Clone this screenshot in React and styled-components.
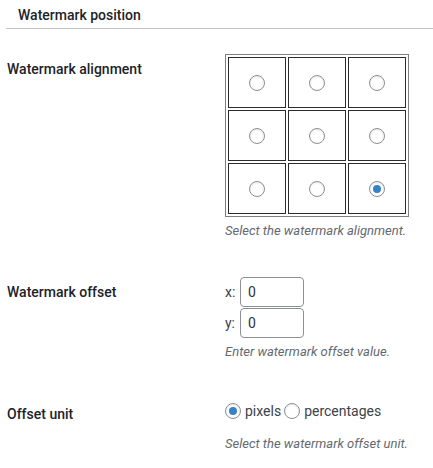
import React, { useState } from "react";
import styled, { createGlobalStyle } from "styled-components";

const GlobalStyle = createGlobalStyle`
  body {
    margin: 0;
    background: #fff;
    font-family: Roboto, "Noto Sans", sans-serif;
    color: #3c434a;
  }
`;

const Page = styled.div`
  padding-left: 6px;
  width: 427px;
`;

const Header = styled.h2`
  margin: 0;
  height: 29px;
  box-sizing: border-box;
  padding: 6px 0 0 12px;
  font-size: 14px;
  font-weight: 500;
  line-height: 18px;
  color: #1d2327;
  border-bottom: 1px solid #c3c4c7;
`;

const Rows = styled.div`
  padding-top: 10px;
`;

const Row = styled.div`
  display: flex;
  padding-left: 1px;
`;

const Label = styled.div`
  width: 218px;
  flex: none;
  padding: ${(p) => p.$top || 20}px 0 20px;
  font-size: 14px;
  font-weight: 500;
  line-height: 18px;
  color: #1d2327;
`;

const Field = styled.div`
  display: flex;
  flex-direction: column;
  align-items: flex-start;
  padding: 15px 0 ${(p) => p.$bottom || 15}px;
  font-size: 14px;
  line-height: 20px;
`;

const Description = styled.p`
  margin: ${(p) => p.$top || 4}px 0 0;
  font-size: 13px;
  line-height: 19px;
  font-style: italic;
  color: #646970;
`;

const Grid = styled.div`
  display: grid;
  grid-template-columns: repeat(3, 58px);
  grid-auto-rows: 51px;
  gap: 2px;
  padding: 2px;
  border: 1px solid #7e7e7e;
`;

const Cell = styled.label`
  display: flex;
  align-items: center;
  justify-content: center;
  border: 1px solid #2c2c2c;
  cursor: pointer;
`;

const Radio = styled.input.attrs({ type: "radio" })`
  appearance: none;
  box-sizing: border-box;
  width: 16px;
  height: 16px;
  margin: 0 ${(p) => p.$gap || 0}px 0 0;
  border: 1px solid #8c8f94;
  border-radius: 50%;
  background: #fff;
  box-shadow: inset 0 1px 2px rgba(0, 0, 0, 0.1);
  display: inline-flex;
  align-items: center;
  justify-content: center;
  flex: none;
  cursor: pointer;

  &:checked::before {
    content: "";
    width: 8px;
    height: 8px;
    border-radius: 50%;
    background: #3582c4;
  }
`;

const OffsetLine = styled.div`
  display: flex;
  align-items: center;
  height: 30px;
  margin-bottom: ${(p) => p.$gap || 0}px;
`;

const Axis = styled.span`
  width: 15px;
  font-size: 14px;
  color: #3c434a;
`;

const NumberInput = styled.input`
  box-sizing: border-box;
  width: 64px;
  height: 30px;
  padding: 0 7px;
  border: 1px solid #8c8f94;
  border-radius: 4px;
  font-family: inherit;
  font-size: 14px;
  color: #2c3338;
  background: #fff;
  outline: none;
`;

const UnitLine = styled.div`
  display: flex;
  align-items: center;
  height: 22px;
`;

const UnitOption = styled.label`
  display: inline-flex;
  align-items: center;
  margin-right: 3px;
  cursor: pointer;
  color: #3c434a;
`;

const positions = [
  "top-left", "top-center", "top-right",
  "middle-left", "middle-center", "middle-right",
  "bottom-left", "bottom-center", "bottom-right",
];

export default function App() {
  const [align, setAlign] = useState("bottom-right");
  const [unit, setUnit] = useState("pixels");

  return (
    <Page>
      <GlobalStyle />
      <Header>Watermark position</Header>
      <Rows>
        <Row>
          <Label $top={21}>Watermark alignment</Label>
          <Field $bottom={22}>
            <Grid>
              {positions.map((pos) => (
                <Cell key={pos}>
                  <Radio
                    name="align"
                    checked={align === pos}
                    onChange={() => setAlign(pos)}
                  />
                </Cell>
              ))}
            </Grid>
            <Description>Select the watermark alignment.</Description>
          </Field>
        </Row>
        <Row>
          <Label $top={21}>Watermark offset</Label>
          <Field $bottom={24}>
            <OffsetLine $gap={1}>
              <Axis>x:</Axis>
              <NumberInput defaultValue="0" />
            </OffsetLine>
            <OffsetLine>
              <Axis>y:</Axis>
              <NumberInput defaultValue="0" />
            </OffsetLine>
            <Description $top={4}>Enter watermark offset value.</Description>
          </Field>
        </Row>
        <Row>
          <Label>Offset unit</Label>
          <Field>
            <UnitLine>
              <UnitOption>
                <Radio
                  $gap={4}
                  name="unit"
                  checked={unit === "pixels"}
                  onChange={() => setUnit("pixels")}
                />
                pixels
              </UnitOption>
              <UnitOption>
                <Radio
                  $gap={4}
                  name="unit"
                  checked={unit === "percentages"}
                  onChange={() => setUnit("percentages")}
                />
                percentages
              </UnitOption>
            </UnitLine>
            <Description $top={12}>Select the watermark offset unit.</Description>
          </Field>
        </Row>
      </Rows>
    </Page>
  );
}
